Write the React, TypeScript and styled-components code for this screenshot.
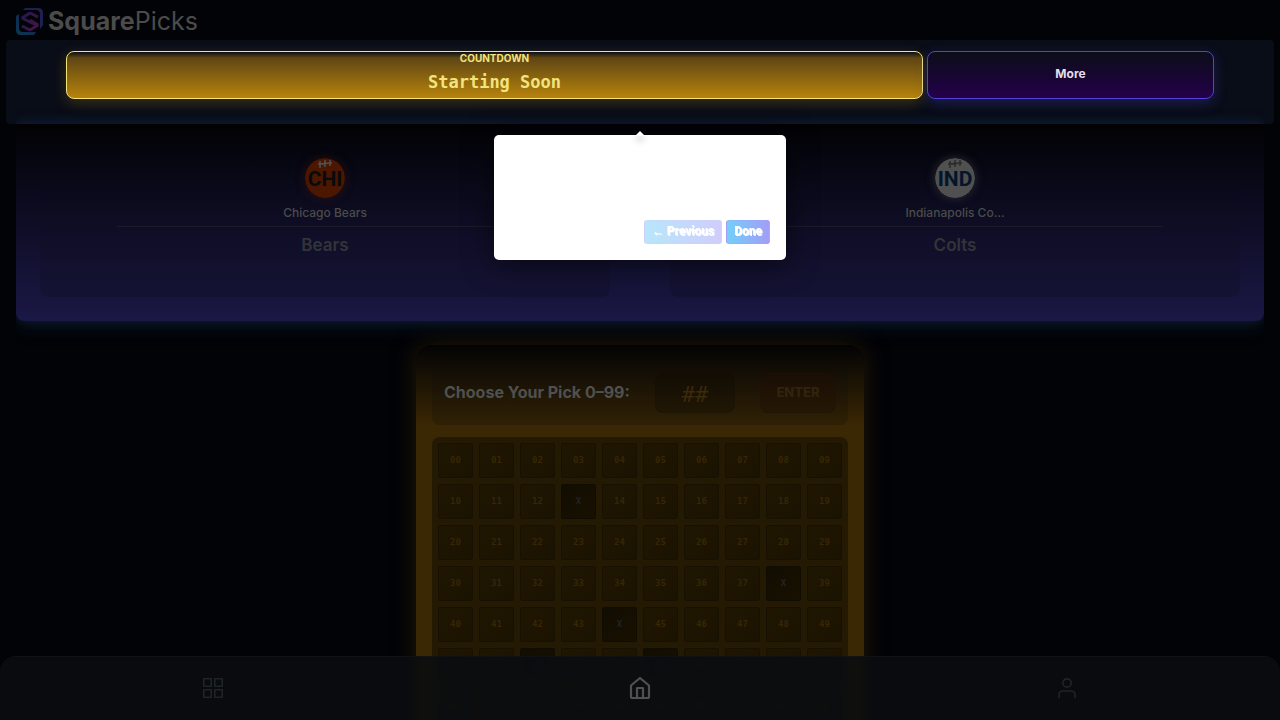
import React from "react";
import styled, { createGlobalStyle } from "styled-components";

const GlobalStyle = createGlobalStyle`
  *, *::before, *::after { box-sizing: border-box; }
  body {
    margin: 0;
    background: #020307;
    font-family: Inter, "Liberation Sans", sans-serif;
    color: #4b4b4b;
  }
  button, input { font: inherit; margin: 0; }
  h1, h2, p { margin: 0; }
`;

const mono = `"DejaVu Sans Mono", "Liberation Mono", monospace`;

const Page = styled.div`
  height: 100vh;
  overflow-y: auto;
  scrollbar-width: none;
`;

const Header = styled.header`
  display: flex;
  align-items: center;
  height: 40px;
  padding: 2px 16px 0;
`;

const Brand = styled.a`
  display: flex;
  align-items: center;
  gap: 5px;
  color: #4b4b4b;
  font-size: 25px;
  line-height: 32px;
  text-decoration: none;
`;

const StatusBar = styled.section`
  display: flex;
  gap: 4px;
  height: 84px;
  margin: 0 6px;
  padding: 11px 60px 0;
  border-radius: 4px;
  background: #090d18;
`;

const Countdown = styled.div`
  flex: 3;
  height: 48px;
  border: 1px solid #f5e27a;
  border-radius: 8px;
  background: linear-gradient(#0d0d17 0, #5f4713 6px, #b7830b 100%);
  box-shadow: 0 4px 14px rgba(190, 140, 20, 0.28);
  color: #f3e37c;
  text-align: center;
`;

const CountdownLabel = styled.p`
  font-size: 10px;
  font-weight: 700;
  line-height: 12px;
`;

const CountdownValue = styled.p`
  font: 700 17px/36px ${mono};
`;

const MoreButton = styled.button`
  flex: 1;
  height: 48px;
  padding: 0 0 4px;
  border: 1px solid #5145d6;
  border-radius: 8px;
  background: linear-gradient(#0b0d18, #24004a);
  box-shadow: 0 4px 14px rgba(80, 69, 214, 0.3);
  color: #e2dfe6;
  font-size: 12px;
  font-weight: 700;
`;

const Scoreboard = styled.section`
  display: grid;
  grid-template-columns: 1fr 1fr;
  gap: 60px;
  margin: 0 16px;
  padding: 24px;
  border-radius: 0 0 8px 8px;
  background: linear-gradient(#020205, #1a1845);
  box-shadow: 0 -2px 12px rgba(25, 48, 84, 0.5), 0 6px 16px rgba(18, 38, 58, 0.5);
  clip-path: inset(-20px 0 -30px);
`;

const Team = styled.article`
  display: flex;
  flex-direction: column;
  align-items: center;
  height: 149px;
  padding: 10px 8px;
  border-radius: 8px;
  background: linear-gradient(transparent, rgba(14, 12, 30, 0.3));
`;

const Badge = styled.svg<{ $glow: string }>`
  flex: none;
  border-radius: 50%;
  box-shadow: 0 0 10px ${(p) => p.$glow};
`;

const TeamName = styled.p`
  margin-top: 4px;
  padding-top: 1px;
  font-size: 12px;
  font-weight: 500;
  line-height: 20px;
`;

const Nickname = styled.h2`
  width: 75%;
  margin-top: 3px;
  padding-top: 8px;
  border-top: 1px solid #1b1b29;
  color: #333438;
  font-size: 17px;
  font-weight: 600;
  line-height: 20px;
  text-align: center;
`;

const PickPanel = styled.section`
  width: 448px;
  max-width: 100%;
  margin: 24px auto 80px;
  padding: 16px;
  border-radius: 16px;
  background: linear-gradient(#030304, #3a2704 80px);
  box-shadow: 0 0 24px rgba(70, 48, 6, 0.5);
`;

const PickForm = styled.form`
  display: flex;
  align-items: center;
  justify-content: space-between;
  height: 64px;
  padding: 12px;
  border-radius: 8px;
  background: rgba(12, 12, 8, 0.22);
`;

const PickLabel = styled.label`
  padding-bottom: 3px;
  color: #505050;
  font-size: 16px;
  font-weight: 700;
`;

const PickInput = styled.input`
  width: 80px;
  height: 40px;
  padding: 2px 0 0;
  border: 1px solid rgba(20, 16, 4, 0.2);
  border-radius: 8px;
  background: rgba(12, 10, 4, 0.3);
  color: #3b2a07;
  font: 400 22px ${mono};
  text-align: center;
  &::placeholder { color: #3b2a07; opacity: 1; }
`;

const EnterButton = styled.button`
  width: 76px;
  height: 40px;
  padding: 0 0 3px;
  border: 1px solid rgba(34, 18, 6, 0.4);
  border-radius: 8px;
  background: rgba(32, 16, 6, 0.4);
  color: #31240b;
  font-size: 13px;
  font-weight: 800;
`;

const Board = styled.div`
  display: grid;
  grid-template-columns: repeat(10, 1fr);
  gap: 6px;
  margin-top: 12px;
  padding: 6px;
  border-radius: 8px;
  background: #241902;
`;

const Cell = styled.button<{ $taken: boolean }>`
  height: 35px;
  padding: 0 0 2px;
  border: 1px solid ${(p) => (p.$taken ? "#100c01" : "#181101")};
  border-radius: 2px;
  background: ${(p) =>
    p.$taken
      ? "linear-gradient(135deg, #120d01, #181101)"
      : "linear-gradient(135deg, #1f1602, #1b1301)"};
  color: ${(p) => (p.$taken ? "#202427" : "#372605")};
  font: 700 9px ${mono};
`;

const BottomNav = styled.nav`
  position: fixed;
  inset: auto 0 0;
  display: grid;
  grid-template-columns: repeat(3, 1fr);
  height: 64px;
  padding-bottom: 1px;
  border-top: 1px solid #101216;
  border-radius: 16px 16px 0 0;
  background: rgba(10, 12, 16, 0.88);
  backdrop-filter: blur(4px);
`;

const NavLink = styled.a<{ $active?: boolean }>`
  display: grid;
  place-items: center;
  color: ${(p) => (p.$active ? "#505050" : "#1f2429")};
`;

const Tour = styled.div`
  position: fixed;
  top: 135px;
  left: 50%;
  display: flex;
  align-items: flex-end;
  justify-content: flex-end;
  gap: 4px;
  width: 292px;
  height: 125px;
  padding: 16px;
  transform: translateX(-50%);
  border-radius: 5px;
  background: #fff;
  box-shadow: 0 3px 30px rgba(0, 0, 0, 0.6);
`;

const TourArrow = styled.svg`
  position: absolute;
  top: -4px;
  left: 50%;
  overflow: visible;
  transform: translateX(-50%);
  filter: drop-shadow(0 4px 3px rgba(0, 0, 0, 0.25));
`;

const TourButton = styled.button<{ $muted?: boolean }>`
  height: 24px;
  padding: 0 7px 2px;
  border: 1px solid rgba(165, 160, 250, 0.4);
  border-radius: 3px;
  background: linear-gradient(90deg, #72cff9, #a29df8);
  color: #fff;
  font-family: Roboto, "Liberation Sans", sans-serif;
  font-size: 12px;
  font-weight: 700;
  text-shadow: 1px 1px 0 #fff;
  opacity: ${(p) => (p.$muted ? 0.5 : 1)};
`;

const taken = new Set([13, 38, 44, 52, 55]);
const squares = Array.from({ length: 70 }, (_, n) => n);

function Logo() {
  return (
    <svg width="27" height="27" viewBox="0 0 27 27" fill="none" aria-hidden="true">
      <defs>
        <linearGradient id="frame" x1="0" y1="27" x2="27" y2="0" gradientUnits="userSpaceOnUse">
          <stop stopColor="#063b54" />
          <stop offset=".5" stopColor="#14264f" />
          <stop offset="1" stopColor="#241c50" />
        </linearGradient>
        <linearGradient id="mark" x1="5" y1="8" x2="24" y2="20" gradientUnits="userSpaceOnUse">
          <stop stopColor="#211b50" />
          <stop offset="1" stopColor="#4b1243" />
        </linearGradient>
      </defs>
      <path d="M7 2 9 0H22Q27 0 27 5V17L24 21V7Q24 2 20 2Z" fill="url(#frame)" />
      <path d="M3 6 0 8V22Q0 27 5 27H18L20 24H7Q3 24 3 20Z" fill="url(#frame)" />
      <path d="M22 9 14 5 6 10 14 14 22 17 14 22 6 18M22 17 14 12" stroke="url(#mark)" strokeWidth="3" strokeLinejoin="bevel" />
    </svg>
  );
}

interface TeamProps {
  code: string;
  name: string;
  nickname: string;
  fill: string;
  ink: string;
  lace: string;
  glow: string;
}

function TeamCard({ code, name, nickname, fill, ink, lace, glow }: TeamProps) {
  return (
    <Team>
      <Badge $glow={glow} width="40" height="40" viewBox="0 0 40 40" role="img" aria-label={code}>
        <circle cx="20" cy="20" r="20" fill={fill} />
        <text x="20" y="28" textAnchor="middle" fill={ink} fontFamily="Roboto, 'Liberation Sans', sans-serif" fontWeight="700" fontSize="21">
          {code}
        </text>
        <path d="M13 6 27 5M15 3V10M20 2V9M25 2V8" stroke={lace} strokeWidth="1.5" />
      </Badge>
      <TeamName>{name}</TeamName>
      <Nickname>{nickname}</Nickname>
    </Team>
  );
}

export default function App() {
  return (
    <>
      <GlobalStyle />
      <Page>
        <Header>
          <Brand href="#">
            <Logo />
            <span><b>Square</b>Picks</span>
          </Brand>
        </Header>
        <StatusBar>
          <Countdown>
            <CountdownLabel>COUNTDOWN</CountdownLabel>
            <CountdownValue>Starting Soon</CountdownValue>
          </Countdown>
          <MoreButton type="button">More</MoreButton>
        </StatusBar>
        <Scoreboard>
          <TeamCard code="CHI" name="Chicago Bears" nickname="Bears" fill="#4b1700" ink="#080a0d" lace="#505050" glow="rgba(75, 23, 0, 0.5)" />
          <TeamCard code="IND" name="Indianapolis Co…" nickname="Colts" fill="#505050" ink="#03152b" lace="#2b2b2b" glow="rgba(80, 80, 80, 0.5)" />
        </Scoreboard>
        <PickPanel>
          <PickForm onSubmit={(e) => e.preventDefault()}>
            <PickLabel htmlFor="pick">Choose Your Pick 0–99:</PickLabel>
            <PickInput id="pick" placeholder="##" inputMode="numeric" />
            <EnterButton type="submit">ENTER</EnterButton>
          </PickForm>
          <Board>
            {squares.map((n) => (
              <Cell key={n} type="button" $taken={taken.has(n)}>
                {taken.has(n) ? "X" : String(n).padStart(2, "0")}
              </Cell>
            ))}
          </Board>
        </PickPanel>
      </Page>
      <BottomNav>
        <NavLink href="#games" aria-label="Games">
          <svg width="24" height="24" viewBox="0 0 24 24" fill="none" stroke="currentColor" strokeWidth="1.6" strokeLinejoin="round" aria-hidden="true">
            <path d="M2.8 2.8h7.4v7.4H2.8ZM13.8 2.8h7.4v7.4h-7.4ZM2.8 13.8h7.4v7.4H2.8ZM13.8 13.8h7.4v7.4h-7.4Z" />
          </svg>
        </NavLink>
        <NavLink href="#home" aria-label="Home" $active>
          <svg width="24" height="24" viewBox="0 0 24 24" fill="none" stroke="currentColor" strokeWidth="2.2" strokeLinejoin="round" aria-hidden="true">
            <path d="M3 9.5 12 2l9 7.500V20.500a1.500 1.500 0 0 1-1.500 1.500h-15A1.500 1.500 0 0 1 3 20.500Z" />
            <path d="M9 22V12h6v10" />
          </svg>
        </NavLink>
        <NavLink href="#profile" aria-label="Profile">
          <svg width="24" height="24" viewBox="0 0 24 24" fill="none" stroke="currentColor" strokeWidth="1.7" strokeLinecap="round" aria-hidden="true">
            <circle cx="12" cy="7" r="4.200" />
            <path d="M4 21.500V19a4 4 0 0 1 4-4h8a4 4 0 0 1 4 4v2.500" />
          </svg>
        </NavLink>
      </BottomNav>
      <Tour role="dialog" aria-label="Tour">
        <TourArrow width="10" height="5" viewBox="0 0 10 5" aria-hidden="true">
          <path d="M0 5 5 0l5 5Z" fill="#fff" />
        </TourArrow>
        <TourButton type="button" $muted>← Previous</TourButton>
        <TourButton type="button">Done</TourButton>
      </Tour>
    </>
  );
}
